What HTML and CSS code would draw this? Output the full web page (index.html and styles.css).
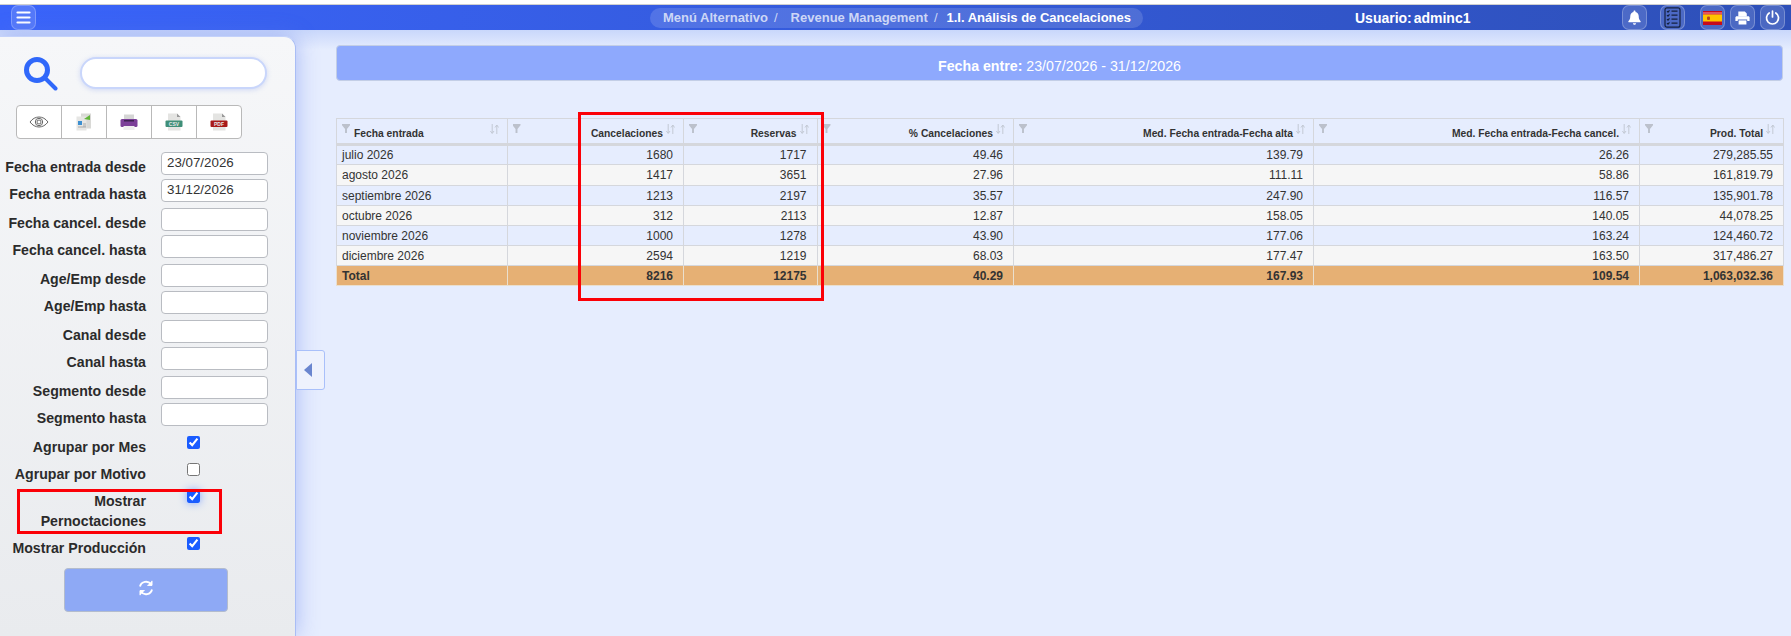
FILE: index.html
```html
<!DOCTYPE html>
<html lang="es">

<head>
    <meta charset="UTF-8">
    <title>Análisis de Cancelaciones</title>
    <link rel="stylesheet" href="styles.css">
</head>

<body>
    <div class="top-strip"></div>

    <!-- Top bar -->
    <nav class="navbar">
        <button class="nav-btn menu-btn">
            <svg width="15" height="13" viewBox="0 0 15 13"><path d="M1.500 1.500h12M1.500 6.500h12M1.500 11.500h12" stroke="#fff" stroke-width="2.200" stroke-linecap="round" fill="none"/></svg>
        </button>
        <div class="breadcrumb">
            <span>Menú Alternativo</span><span class="sep">/</span>
            <span class="crumb-two">Revenue Management</span><span class="sep">/</span>
            <span class="current">1.I. Análisis de Cancelaciones</span>
        </div>
        <div class="user">Usuario: adminc1</div>
        <div class="nav-icons">
            <button class="nav-btn">
                <svg width="13" height="15" viewBox="0 0 13 15"><path d="M6.500 0.400c.6 0 1 .4 1 1v.5c2 .4 3.200 2 3.200 4.200 0 3 .8 3.900 1.900 5.100.3.400 0 1-.5 1H.9c-.5 0-.8-.6-.5-1 1.100-1.200 1.900-2.100 1.900-5.100 0-2.200 1.200-3.800 3.200-4.200v-.5c0-.6.4-1 1-1z" fill="#fff"/><path d="M4.900 13.200h3.200c0 .9-.7 1.500-1.600 1.500s-1.600-.6-1.600-1.500z" fill="#fff"/></svg>
            </button>
            <button class="nav-btn list-btn">
                <svg width="17" height="21" viewBox="0 0 17 21" fill="none" stroke="#14213f" stroke-width="1.200"><rect x="1" y="0.800" width="15" height="19.400" rx="2"/><path d="M7.500 4.200h6M7.500 8.200h6M7.500 12.200h6M7.500 16.200h6"/><path d="M3 4.200l1 1 1.500-1.800M3 8.200l1 1 1.500-1.800M3 12.200l1 1 1.500-1.800M3 16.200l1 1 1.500-1.800"/></svg>
            </button>
            <button class="nav-btn flag-btn">
                <svg width="19" height="14" viewBox="0 0 19 14"><rect width="19" height="14" fill="#c60b1e"/><rect y="1" width="19" height="2.500" fill="#e0565f"/><rect y="3.500" width="19" height="7" fill="#ffc400"/><rect x="4" y="5.500" width="3" height="3.400" rx="1" fill="#b5471f"/></svg>
            </button>
            <button class="nav-btn print-btn">
                <svg width="15" height="14" viewBox="0 0 15 14" fill="#fff"><path d="M3.300 0.500h6.500l2 2v3h-8.500z"/><path d="M1.800 5.200h11.400c.8 0 1.400.6 1.400 1.400v3.400h-2.400v-1.600H2.800v1.600H.4V6.600c0-.8.6-1.400 1.400-1.400z"/><rect x="3.600" y="9.400" width="7.800" height="4.100"/></svg>
            </button>
            <button class="nav-btn print-btn">
                <svg width="15" height="15" viewBox="0 0 15 15" fill="none" stroke="#fff" stroke-width="1.700" stroke-linecap="round"><path d="M4.200 3a6 6 0 1 0 6.600 0"/><path d="M7.500 1v6"/></svg>
            </button>
        </div>
    </nav>

    <div class="page">
        <!-- Filters -->
        <aside class="sidebar">
            <div class="search-row">
                <svg width="34" height="34" viewBox="0 0 34 34" fill="none" stroke="#3068fa"><circle cx="13" cy="13" r="10.500" stroke-width="5"/><path d="M21.500 21.500l10 10" stroke-width="4" stroke-linecap="round"/></svg>
                <input type="text" class="search-input">
            </div>

            <div class="tool-group">
                <button class="tool-btn">
                    <svg width="20" height="12" viewBox="0 0 20 12" fill="none" stroke="#666"><path d="M1 6c2.500-3.300 5.500-5 9-5s6.500 1.700 9 5c-2.500 3.300-5.500 5-9 5s-6.500-1.700-9-5z"/><circle cx="10" cy="6" r="3.700"/><rect x="8.200" y="4.200" width="3.600" height="3.600" rx="1"/></svg>
                </button>
                <button class="tool-btn">
                    <svg width="16" height="18" viewBox="0 0 16 18"><rect x="5" y="0.500" width="10" height="15" fill="#d9d9d6"/><rect x="0.500" y="3.500" width="10" height="14" fill="#e6e6e4"/><rect x="2" y="8" width="4" height="4" fill="#3d8fd0"/><path d="M8 6l6-4v5z" fill="#62b53a"/><path d="M7 11h3M7 13h3M2 14h8" stroke="#aaa"/></svg>
                </button>
                <button class="tool-btn">
                    <svg width="18" height="17" viewBox="0 0 18 17"><rect x="4" y="0.500" width="10" height="6" fill="#d5d5d5"/><rect x="0.500" y="5" width="17" height="8" rx="1.500" fill="#7b3f98"/><rect x="4" y="6" width="10" height="1.500" fill="#3c2050"/><rect x="3.500" y="12" width="11" height="4" fill="#eee"/></svg>
                </button>
                <button class="tool-btn">
                    <svg width="18" height="18" viewBox="0 0 18 18"><path d="M3 0.500h9l3.500 3.500v13.500H3z" fill="#e4e4e2"/><path d="M12 0.500V4h3.500z" fill="#999"/><rect x="0.500" y="7.500" width="17" height="6.500" rx="1" fill="#3f8f78"/><text x="9" y="12.700" class="file-tag">CSV</text></svg>
                </button>
                <button class="tool-btn">
                    <svg width="18" height="18" viewBox="0 0 18 18"><path d="M3 0.500h9l3.500 3.500v13.500H3z" fill="#e4e4e2"/><path d="M12 0.500V4h3.500z" fill="#999"/><rect x="0.500" y="7.500" width="17" height="6.500" rx="1" fill="#a81a1a"/><text x="9" y="12.700" class="file-tag">PDF</text></svg>
                </button>
            </div>

            <div class="fields">
                <div class="field-pair">
                    <label>Fecha entrada desde</label><input type="text" value="23/07/2026">
                    <label>Fecha entrada hasta</label><input type="text" value="31/12/2026">
                </div>
                <div class="field-pair">
                    <label>Fecha cancel. desde</label><input type="text">
                    <label>Fecha cancel. hasta</label><input type="text">
                </div>
                <div class="field-pair">
                    <label>Age/Emp desde</label><input type="text">
                    <label>Age/Emp hasta</label><input type="text">
                </div>
                <div class="field-pair">
                    <label>Canal desde</label><input type="text">
                    <label>Canal hasta</label><input type="text">
                </div>
                <div class="field-pair">
                    <label>Segmento desde</label><input type="text">
                    <label>Segmento hasta</label><input type="text">
                </div>
            </div>

            <div class="checks">
                <label>Agrupar por Mes</label><input type="checkbox" checked>
                <label>Agrupar por Motivo</label><input type="checkbox">
                <label>Mostrar Pernoctaciones</label><input type="checkbox" class="focused" checked>
                <label>Mostrar Producción</label><input type="checkbox" checked>
            </div>

            <button class="refresh-btn">
                <svg width="16" height="16" viewBox="0 0 16 16" fill="none" stroke="#fff" stroke-width="1.900"><path d="M2 6.500A6.200 6.200 0 0 1 13 4.200"/><path d="M14 .8v4.600H9.400" fill="#fff" stroke-width="1"/><path d="M14 9.500A6.200 6.200 0 0 1 3 11.800"/><path d="M2 15.200v-4.600h4.600" fill="#fff" stroke-width="1"/></svg>
            </button>
        </aside>

        <button class="collapse-tab"><span class="arrow-left"></span></button>

        <!-- Report -->
        <main class="content">
            <div class="banner"><b>Fecha entre:</b> 23/07/2026 - 31/12/2026</div>

            <table class="report">
                <colgroup>
                    <col class="c1"><col class="c2"><col class="c3"><col class="c4"><col class="c5"><col class="c6"><col class="c7">
                </colgroup>
                <thead>
                    <tr>
                        <th class="left"><div class="th-in"><i class="funnel"></i><span class="th-label">Fecha entrada</span><svg class="sort" viewBox="0 0 9 10"><path d="M2.200 0v9M.4 7l1.800 2.500L4 7M6.800 10V1M5 3.500L6.800 1l1.800 2.500"/></svg></div></th>
                        <th><div class="th-in"><i class="funnel"></i><span class="th-label">Cancelaciones</span><svg class="sort" viewBox="0 0 9 10"><path d="M2.200 0v9M.4 7l1.800 2.500L4 7M6.800 10V1M5 3.500L6.800 1l1.800 2.500"/></svg></div></th>
                        <th><div class="th-in"><i class="funnel"></i><span class="th-label">Reservas</span><svg class="sort" viewBox="0 0 9 10"><path d="M2.200 0v9M.4 7l1.800 2.500L4 7M6.800 10V1M5 3.500L6.800 1l1.800 2.500"/></svg></div></th>
                        <th><div class="th-in"><i class="funnel"></i><span class="th-label">% Cancelaciones</span><svg class="sort" viewBox="0 0 9 10"><path d="M2.200 0v9M.4 7l1.800 2.500L4 7M6.800 10V1M5 3.500L6.800 1l1.800 2.500"/></svg></div></th>
                        <th><div class="th-in"><i class="funnel"></i><span class="th-label">Med. Fecha entrada-Fecha alta</span><svg class="sort" viewBox="0 0 9 10"><path d="M2.200 0v9M.4 7l1.800 2.500L4 7M6.800 10V1M5 3.500L6.800 1l1.800 2.500"/></svg></div></th>
                        <th><div class="th-in"><i class="funnel"></i><span class="th-label">Med. Fecha entrada-Fecha cancel.</span><svg class="sort" viewBox="0 0 9 10"><path d="M2.200 0v9M.4 7l1.800 2.500L4 7M6.800 10V1M5 3.500L6.800 1l1.800 2.500"/></svg></div></th>
                        <th><div class="th-in"><i class="funnel"></i><span class="th-label">Prod. Total</span><svg class="sort" viewBox="0 0 9 10"><path d="M2.200 0v9M.4 7l1.800 2.500L4 7M6.800 10V1M5 3.500L6.800 1l1.800 2.500"/></svg></div></th>
                    </tr>
                </thead>
                <tbody>
                    <tr><td class="left">julio 2026</td><td>1680</td><td>1717</td><td>49.46</td><td>139.79</td><td>26.26</td><td>279,285.55</td></tr>
                    <tr><td class="left">agosto 2026</td><td>1417</td><td>3651</td><td>27.96</td><td>111.11</td><td>58.86</td><td>161,819.79</td></tr>
                    <tr><td class="left">septiembre 2026</td><td>1213</td><td>2197</td><td>35.57</td><td>247.90</td><td>116.57</td><td>135,901.78</td></tr>
                    <tr><td class="left">octubre 2026</td><td>312</td><td>2113</td><td>12.87</td><td>158.05</td><td>140.05</td><td>44,078.25</td></tr>
                    <tr><td class="left">noviembre 2026</td><td>1000</td><td>1278</td><td>43.90</td><td>177.06</td><td>163.24</td><td>124,460.72</td></tr>
                    <tr><td class="left">diciembre 2026</td><td>2594</td><td>1219</td><td>68.03</td><td>177.47</td><td>163.50</td><td>317,486.27</td></tr>
                </tbody>
                <tfoot>
                    <tr><td class="left">Total</td><td>8216</td><td>12175</td><td>40.29</td><td>167.93</td><td>109.54</td><td>1,063,032.36</td></tr>
                </tfoot>
            </table>
        </main>
    </div>

    <!-- Red marks drawn over the screenshot -->
    <div class="mark mark-side"></div>
    <div class="mark mark-table"></div>
</body>

</html>
```

FILE: styles.css
```css
* {
    box-sizing: border-box;
}

html,
body {
    height: 100%;
}

body {
    margin: 0;
    display: flex;
    flex-direction: column;
    overflow: hidden;
    font-family: "Liberation Sans", Arial, sans-serif;
    color: #2b2b2b;
    background: #e6edfe;
}

button {
    padding: 0;
    font-family: inherit;
    cursor: pointer;
}

.top-strip {
    height: 5px;
    background: #fff;
    border-bottom: 1px solid #cfcfcf;
}

/* Top bar */
.navbar {
    display: flex;
    align-items: center;
    flex: none;
    height: 25px;
    padding: 0 6px 0 11px;
    background: linear-gradient(90deg, #3a64fa, #2e50b8);
}

.nav-btn {
    display: flex;
    align-items: center;
    justify-content: center;
    flex: none;
    width: 25px;
    height: 25px;
    border: 1px solid rgba(255, 255, 255, 0.25);
    border-radius: 7px;
    background: rgba(255, 255, 255, 0.14);
}

.breadcrumb {
    display: flex;
    align-items: center;
    flex: none;
    width: 493px;
    height: 20px;
    margin-left: 614px;
    padding-left: 13px;
    border-radius: 10px;
    background: rgba(255, 255, 255, 0.14);
    font-size: 13px;
    font-weight: bold;
    white-space: nowrap;
    color: #cdd7f6;
}

.sep {
    margin-left: 6px;
    font-weight: normal;
}

.crumb-two {
    margin-left: 13px;
}

.current {
    margin-left: 9px;
    color: #fff;
}

.user {
    margin-left: 212px;
    font-size: 14px;
    font-weight: bold;
    word-spacing: -2px;
    white-space: nowrap;
    color: #fff;
}

.nav-icons {
    display: flex;
    margin-left: auto;
}

.list-btn {
    margin-left: 13px;
}

.flag-btn {
    margin-left: 15px;
}

.print-btn {
    margin-left: 5px;
}

/* Page */
.page {
    position: relative;
    display: flex;
    flex: 1;
    min-height: 0;
    background: linear-gradient(#c9d7fb, #e6edfe 20px);
}

.sidebar {
    flex: none;
    width: 296px;
    margin-top: 6px;
    padding-top: 20px;
    border-right: 1px solid #a9bdf5;
    border-top: 1px solid #c4d2fa;
    border-top-right-radius: 12px;
    background: linear-gradient(#f6f7f9, #e9ebee);
    box-shadow: 0 0 22px rgba(90, 120, 235, 0.45);
}

.search-row {
    display: flex;
    gap: 22px;
    padding-left: 24px;
}

.search-input {
    width: 187px;
    height: 32px;
    border: 2px solid #c9d6fb;
    border-radius: 16px;
    background: #fff;
    box-shadow: 0 1px 5px rgba(120, 145, 235, 0.3);
}

.tool-group {
    display: flex;
    width: 226px;
    height: 34px;
    margin: 14px 0 0 16px;
    border: 1px solid #b9b9b9;
    border-radius: 4px;
    background: #fff;
}

.tool-btn {
    display: flex;
    align-items: center;
    justify-content: center;
    flex: 1;
    border: none;
    border-right: 1px solid #b9b9b9;
    background: none;
}

.tool-btn:last-child {
    border-right: none;
}

.file-tag {
    font-size: 5px;
    font-weight: bold;
    fill: #e8e8e8;
    text-anchor: middle;
}

.fields {
    display: flex;
    flex-direction: column;
    gap: 6px;
    margin-top: 13px;
}

.field-pair,
.checks {
    display: grid;
    grid-template-columns: 146px 107px;
    column-gap: 15px;
}

.field-pair {
    row-gap: 4px;
}

.field-pair label,
.checks label {
    font-size: 14.15px;
    font-weight: bold;
    line-height: 20px;
    text-align: right;
}

.field-pair label {
    height: 23px;
    padding-top: 5px;
}

.field-pair input {
    width: 107px;
    height: 23px;
    padding: 0 5px 2px;
    border: 1px solid #b9bcc2;
    border-radius: 4px;
    background: #fff;
    font-family: inherit;
    font-size: 13.33px;
    color: #333;
}

.checks {
    row-gap: 7px;
    margin-top: 11px;
}

.checks input {
    width: 13px;
    height: 13px;
    margin: -1px 0 0 26px;
    accent-color: #1a5cff;
}

.checks .focused {
    box-shadow: 0 0 8px #7ea2ff;
}

.refresh-btn {
    display: flex;
    align-items: center;
    justify-content: center;
    width: 164px;
    height: 44px;
    margin: 10px 0 0 64px;
    padding-bottom: 4px;
    border: 1px solid #b3bccd;
    border-radius: 4px;
    background: #8ea9f5;
}

.collapse-tab {
    position: absolute;
    top: 320px;
    left: 296px;
    display: flex;
    align-items: center;
    padding-left: 7px;
    width: 29px;
    height: 40px;
    border: 1px solid #a9c0fa;
    border-radius: 0 3px 3px 0;
    background: #eef2fd;
}

.arrow-left {
    width: 0;
    height: 0;
    border-top: 7px solid transparent;
    border-bottom: 7px solid transparent;
    border-right: 8px solid #6a86cf;
}

/* Report */
.content {
    flex: 1;
    min-width: 0;
    padding: 15px 8px 0 40px;
}

.banner {
    height: 36px;
    border: 1px solid #c3cee6;
    border-radius: 4px;
    background: #8ea9fd;
    font-size: 14.2px;
    line-height: 40px;
    text-align: center;
    color: #fff;
}

.report {
    width: 1447px;
    margin-top: 37px;
    border-collapse: collapse;
    table-layout: fixed;
    font-size: 12px;
    color: #333;
}

.c1 {
    width: 170.5px;
}

.c2 {
    width: 176.5px;
}

.c3 {
    width: 133.5px;
}

.c4 {
    width: 196.5px;
}

.c5 {
    width: 300px;
}

.c6 {
    width: 326px;
}

.c7 {
    width: 144px;
}

.report th,
.report td {
    border: 1px solid #d5d7dc;
}

.report th {
    height: 26px;
    padding: 0;
    border-bottom: 3px solid #d5d7dc;
    font-size: 10.3px;
}

.th-in {
    display: flex;
    align-items: flex-start;
    height: 24px;
    padding: 5px 8px 0 5px;
}

.th-label {
    flex: 1;
    padding: 4px 3px 0 0;
    text-align: right;
}

.left .th-label {
    padding-left: 4px;
    text-align: left;
}

.funnel {
    flex: none;
    width: 8px;
    height: 9px;
    background: #bcc1cc;
    clip-path: polygon(0 0, 100% 0, 100% 15%, 62% 55%, 62% 100%, 38% 100%, 38% 55%, 0 15%);
}

.sort {
    flex: none;
    width: 9px;
    height: 10px;
    fill: none;
    stroke: #c3c9d4;
    stroke-width: 1;
}

.report td {
    height: 20px;
    padding: 0 10px 0 5px;
    text-align: right;
    line-height: 18px;
}

.report td.left {
    text-align: left;
}

.report tbody tr:nth-child(2) td {
    height: 21px;
}

.report tbody tr:nth-child(even) td {
    background: #f6f6f6;
}

.report tfoot td {
    background: #e6b074;
    font-weight: bold;
    border-color: #eadfce;
}

/* Red marks */
.mark {
    position: absolute;
    border: 3px solid #fb0007;
    pointer-events: none;
}

.mark-side {
    top: 489px;
    left: 17px;
    width: 205px;
    height: 45px;
}

.mark-table {
    top: 112px;
    left: 578px;
    width: 246px;
    height: 189px;
}
```
